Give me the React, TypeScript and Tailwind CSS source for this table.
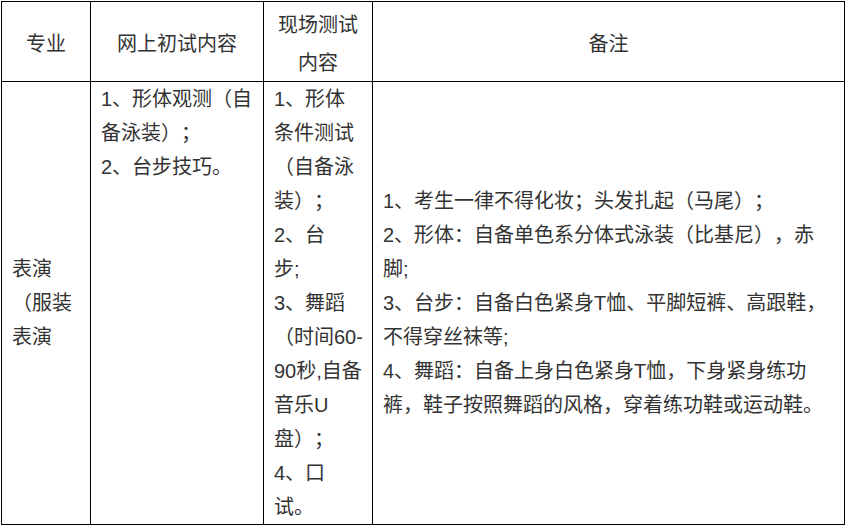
const font = 'font-["Liberation_Sans","Noto_Sans_CJK_SC",sans-serif]';

const Lines = ({ lines }: { lines: string[] }) => (
  <div>
    {lines.map((l, i) => (
      <div key={i} className="whitespace-nowrap">
        {l}
      </div>
    ))}
  </div>
);

const headCell = 'border-l border-t border-black flex items-center justify-center text-center leading-[38px] pt-1';
const bodyCell = 'border-l border-t border-black pl-[10px] pr-[9px] leading-[34px]';

const App = () => {
  return (
    <div className={`bg-white min-h-screen pl-px pt-px text-[20px] text-[#333] [text-spacing-trim:space-all] ${font}`}>
      <div className="grid w-[844px] grid-cols-[89px_173px_109px_472px] grid-rows-[80px_auto] border-r border-b border-black">
        <div className={headCell}>专业</div>
        <div className={headCell}>网上初试内容</div>
        <div className={headCell}>
          <Lines lines={['现场测试', '内容']} />
        </div>
        <div className={headCell}>备注</div>

        <div className={`${bodyCell} flex items-center`}>
          <Lines lines={['表演', '（服装', '表演']} />
        </div>
        <div className={bodyCell}>
          <Lines lines={['1、形体观测（自', '备泳装）；', '2、台步技巧。']} />
        </div>
        <div className={bodyCell}>
          <Lines
            lines={[
              '1、形体',
              '条件测试',
              '（自备泳',
              '装）；',
              '2、台',
              '步;',
              '3、舞蹈',
              '（时间60-',
              '90秒,自备',
              '音乐U',
              '盘）；',
              '4、口',
              '试。',
            ]}
          />
        </div>
        <div className={`${bodyCell} flex items-center`}>
          <Lines
            lines={[
              '1、考生一律不得化妆；头发扎起（马尾）；',
              '2、形体：自备单色系分体式泳装（比基尼），赤',
              '脚;',
              '3、台步：自备白色紧身T恤、平脚短裤、高跟鞋，',
              '不得穿丝袜等;',
              '4、舞蹈：自备上身白色紧身T恤，下身紧身练功',
              '裤，鞋子按照舞蹈的风格，穿着练功鞋或运动鞋。',
            ]}
          />
        </div>
      </div>
    </div>
  );
};

export default App;
